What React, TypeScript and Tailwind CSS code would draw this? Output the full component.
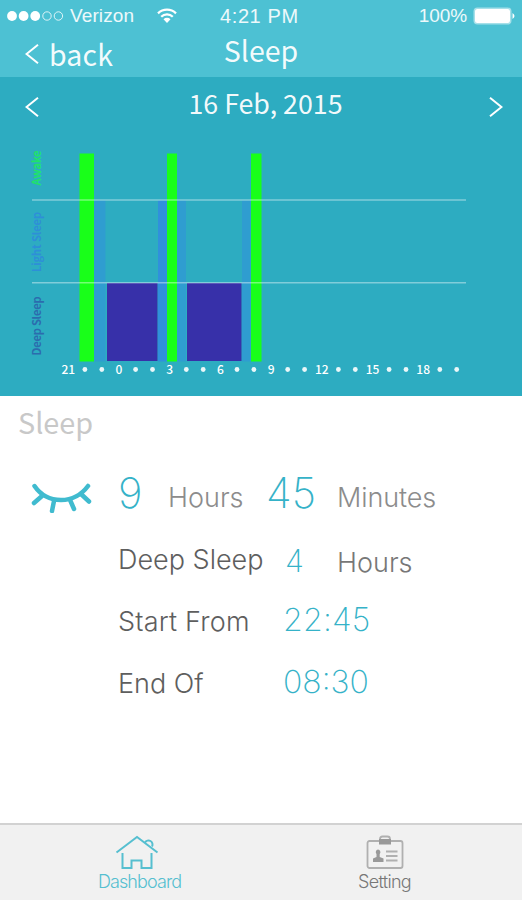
import { ReactNode } from 'react';
import clsx from 'clsx';

interface Bar {
  x: number;
  y: number;
  width: number;
  height: number;
  color: string;
}

// Light sleep sits at the back, then deep sleep, then awake
const bars: Bar[] = [
  { x: 94, y: 200.5, width: 11.5, height: 161, color: '#2f9dd0' },
  { x: 158, y: 200.5, width: 9, height: 161, color: '#3090dc' },
  { x: 177, y: 200.5, width: 9, height: 161, color: '#2f9dd0' },
  { x: 242, y: 200.5, width: 8.5, height: 161, color: '#2f9dd0' },
  { x: 107, y: 283, width: 50.5, height: 78, color: '#3730a9' },
  { x: 187, y: 283, width: 54.5, height: 78, color: '#3730a9' },
  { x: 79.5, y: 153.5, width: 14.5, height: 208, color: '#19ff19' },
  { x: 167, y: 153.5, width: 10, height: 208, color: '#19ff19' },
  { x: 251, y: 153.5, width: 10.5, height: 208, color: '#19ff19' },
];

const levels = [
  { label: 'Awake', y: 168, length: 35, color: '#1fe368' },
  { label: 'Light Sleep', y: 242, length: 60, color: '#2d8fd8' },
  { label: 'Deep Sleep', y: 326, length: 59, color: '#2b6cae' },
];

const ticks = ['21', '', '', '0', '', '', '3', '', '', '6', '', '', '9', '', '', '12', '', '', '15', '', '', '18', '', ''];

const SleepChart = () => (
  <svg viewBox="0 136 522 260" className="block h-[260px] w-full font-['Noto_Sans_CJK_SC','Noto_Sans',sans-serif]">
    {bars.map((bar, i) => (
      <rect key={i} x={bar.x} y={bar.y} width={bar.width} height={bar.height} fill={bar.color} />
    ))}
    <path d="M32 200h434M32 282.7h434" stroke="#fff" strokeOpacity={0.4} strokeWidth={1.5} />
    {levels.map((level) => (
      <text
        key={level.label}
        transform={`translate(41 ${level.y}) rotate(-90)`}
        textAnchor="middle"
        textLength={level.length}
        fontSize={11}
        fontWeight={700}
        fill={level.color}
      >
        {level.label}
      </text>
    ))}
    {ticks.map((tick, i) => {
      const x = 68.3 + i * 16.9;
      return tick ? (
        <text key={i} x={x} y={374} textAnchor="middle" fontSize={12} fontWeight={500} fill="#fff">
          {tick}
        </text>
      ) : (
        <circle key={i} cx={x - 0.3} cy={369.5} r={2.4} fill="#fff" fillOpacity={0.9} />
      );
    })}
  </svg>
);

const Chevron = ({ right = false }: { right?: boolean }) => (
  <svg viewBox="0 0 14 20" className={clsx('h-5 w-[14px]', right && 'rotate-180')} fill="none" stroke="#fff" strokeWidth={2}>
    <path d="M13 .8 1.5 10 13 19.2" />
  </svg>
);

const StatusBar = () => (
  <div className="flex h-8 items-center pl-[7px] pr-[6px] text-[19px] font-normal text-white/90">
    <svg viewBox="0 0 57 10" className="h-[10px] w-[57px]">
      {[5, 16.6, 28.2].map((cx) => (
        <circle key={cx} cx={cx} cy={5} r={4.9} fill="#fff" />
      ))}
      {[40, 51.4].map((cx) => (
        <circle key={cx} cx={cx} cy={5} r={4.2} fill="none" stroke="#fff" strokeWidth={1} strokeOpacity={0.8} />
      ))}
    </svg>
    <span className="ml-[6px] w-[87px] leading-8 tracking-[0.1px]">Verizon</span>
    <svg viewBox="0 0 20 16" className="h-4 w-5" fill="none" stroke="#fff" strokeWidth={2.3}>
      <path d="M1 5.3a13 13 0 0 1 18 0M4.2 8.8a8.3 8.3 0 0 1 11.6 0" />
      <path d="M6.5 11.3a5 5 0 0 1 7 0L10 15z" fill="#fff" stroke="none" />
    </svg>
    <span className="ml-[43px] text-[20px] tracking-[0.6px]">4:21 PM</span>
    <span className="ml-auto tracking-[-0.1px]">100%</span>
    <svg viewBox="0 0 43 18" className="ml-[6px] h-[18px] w-[43px]" fill="#fff">
      <rect x=".5" y=".5" width="38" height="17" rx="4" fillOpacity={0.5} />
      <rect x="2" y="2" width="35" height="14" rx="2.5" />
      <path d="M39.5 6q4 3 0 6z" />
    </svg>
  </div>
);

const ClosedEye = () => (
  <svg viewBox="0 0 62 30" className="h-[30px] w-[62px]" fill="none" stroke="#40bbcf" strokeWidth={4.5} strokeLinecap="round">
    <path d="M3.5 3C9 11 17 17 30 17S51 11 57 3" />
    <path d="M11 13 3 20M23 18 21 28M39.5 18 43 26M50 11 58 18.5" />
  </svg>
);

interface StatProps {
  label: string;
  className?: string;
  children: ReactNode;
}

const Stat = ({ label, className, children }: StatProps) => (
  <div className={clsx('flex items-baseline pl-[118px]', className)}>
    <span className="w-[165px] text-[27px] leading-[40px] text-[#5e5e5e]">{label}</span>
    {children}
  </div>
);

const TabBar = () => (
  <nav className="grid h-[77px] grid-cols-2 border-t-2 border-[#d2d2d2] bg-[#f1f1f1] text-[18px] leading-6 tracking-[-0.9px]">
    <div className="flex flex-col items-center pl-[18px] pt-[9px] text-[#56bfd0]">
      <svg viewBox="0 0 44 36" className="mr-[5px] h-9 w-11" fill="none" stroke="currentColor" strokeWidth={2}>
        <path d="M1.5 18.5 22 3l20.5 15.5M7.5 19v15h9v-7.5h10V34h10V19M30 8.5a4 4 0 1 1 7 4" />
      </svg>
      <span>Dashboard</span>
    </div>
    <div className="flex flex-col items-center pr-[14px] pt-[9px] text-[#777]">
      <svg viewBox="0 0 38 36" className="h-9 w-[38px]" fill="none" stroke="#b0b0b0" strokeWidth={1.8}>
        <rect x="1.5" y="7" width="35" height="27" rx="2" />
        <path d="M14 5q0-2.5 2.5-2.5h5Q24 2.5 24 5" />
        <path
          d="M13 5h12v5.5H13zM12 15.5a2.7 2.7 0 0 1 1.7 4.5v3l3.8 1.5V28H7v-3.500l3.500-1.500v-3A2.7 2.7 0 0 1 12 15.500z"
          fill="#999"
          stroke="none"
        />
        <path d="M20 17.5h11.5M20 22h11.5M20 26.5h11.5" />
      </svg>
      <span className="tracking-[-0.7px]">Setting</span>
    </div>
  </nav>
);

export default function App() {
  return (
    <div className="flex h-[900px] w-[522px] flex-col overflow-hidden bg-white font-['Inter','Liberation_Sans',sans-serif] font-light">
      <header className="h-[77px] bg-[#4dc1d3] font-['Liberation_Sans',sans-serif]">
        <StatusBar />
        <div className="grid h-10 grid-cols-[1fr_auto_1fr] font-['Noto_Sans_CJK_SC','Noto_Sans',sans-serif] text-[28.5px] leading-[36px] font-normal text-white/95">
          <div className="flex h-10 items-center pl-[25px] pt-[4px]">
            <Chevron />
            <span className="ml-[10px] pb-px tracking-[0.2px]">back</span>
          </div>
          <span>Sleep</span>
        </div>
      </header>

      <section className="h-[319px] bg-[#2dacc1] font-['Noto_Sans_CJK_SC','Noto_Sans',sans-serif]">
        <div className="flex h-[59px] items-center justify-between pl-[25px] pr-[19px] text-[26.8px] font-normal text-white/95">
          <Chevron />
          <span className="pb-[6px] pl-[3px]">16 Feb, 2015</span>
          <Chevron right />
        </div>
        <SleepChart />
      </section>

      <main className="flex-1">
        <h1 className="h-[69px] pl-[18px] pt-[5px] font-['Noto_Sans_CJK_SC','Noto_Sans',sans-serif] text-[28.800px] leading-[42px] font-normal text-[#c8c8c8]">
          Sleep
        </h1>
        <div className="flex h-[70px] pl-[31px]">
          <div className="w-[87px] pt-[18px]">
            <ClosedEye />
          </div>
          <div className="flex items-baseline text-[27px] leading-[56px] text-[#8c8c8c]">
            <span className="w-[50px] text-[42px] font-extralight text-[#35b2c8]">9</span>
            <span className="w-[98px] -translate-y-px">Hours</span>
            <span className="w-[71px] text-[42px] font-extralight text-[#35b2c8]">45</span>
            <span className="-translate-y-px tracking-[-0.1px]">Minutes</span>
          </div>
        </div>
        <Stat label="Deep Sleep" className="h-[61px]">
          <span className="w-[54px] translate-y-[3px] pl-[2px] text-[31px] font-extralight text-[#35b2c8]">4</span>
          <span className="translate-y-[3px] text-[27px] text-[#777]">Hours</span>
        </Stat>
        <Stat label="Start From" className="h-[62px] tracking-[0.2px]">
          <span className="text-[32px] font-extralight text-[#35b2c8]">22:45</span>
        </Stat>
        <Stat label="End Of">
          <span className="text-[32px] font-extralight text-[#35b2c8]">08:30</span>
        </Stat>
      </main>

      <TabBar />
    </div>
  );
}
